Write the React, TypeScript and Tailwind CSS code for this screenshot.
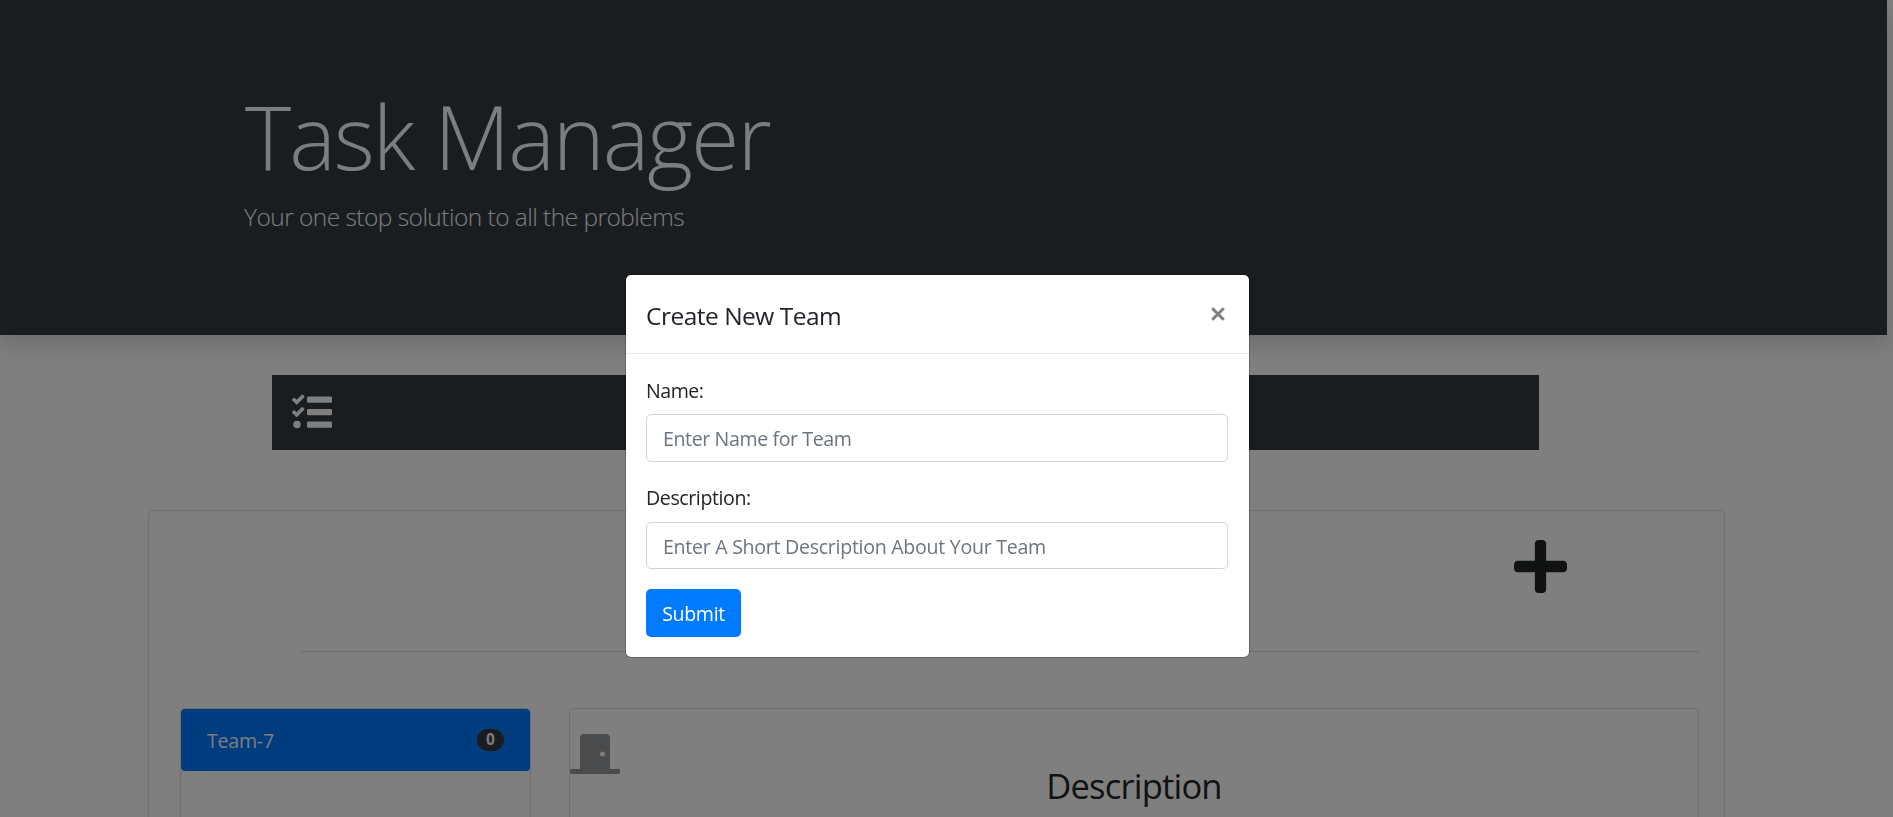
import React from "react";

function TasksIcon() {
  return (
    <svg viewBox="0 0 512 512" className="h-10 w-10 fill-white">
      <path d="M139.61 35.5a12 12 0 0 0-17 0L58.93 98.81l-22.7-22.12a12 12 0 0 0-17 0L3.53 92.41a12 12 0 0 0 0 17l47.59 47.4a12.78 12.78 0 0 0 17.61 0l15.59-15.62L156.52 69a12.09 12.09 0 0 0 .09-17zm0 159.19a12 12 0 0 0-17 0l-63.68 63.72-22.7-22.1a12 12 0 0 0-17 0L3.53 252a12 12 0 0 0 0 17L51 316.5a12.77 12.77 0 0 0 17.6 0l15.7-15.69 72.2-72.22a12 12 0 0 0 .09-16.9zM64 368c-26.49 0-48.59 21.5-48.59 48S37.53 464 64 464a48 48 0 0 0 0-96zm432 8H208a16 16 0 0 0-16 16v48a16 16 0 0 0 16 16h288a16 16 0 0 0 16-16v-48a16 16 0 0 0-16-16zm0-320H208a16 16 0 0 0-16 16v48a16 16 0 0 0 16 16h288a16 16 0 0 0 16-16V72a16 16 0 0 0-16-16zm0 160H208a16 16 0 0 0-16 16v48a16 16 0 0 0 16 16h288a16 16 0 0 0 16-16v-48a16 16 0 0 0-16-16z" />
    </svg>
  );
}

function PlusIcon() {
  return (
    <svg viewBox="0 0 448 512" className="h-[61px] w-[53px] fill-[#212529]">
      <path d="M416 208H272V64c0-17.67-14.33-32-32-32h-32c-17.67 0-32 14.33-32 32v144H32c-17.67 0-32 14.33-32 32v32c0 17.67 14.33 32 32 32h144v144c0 17.67 14.33 32 32 32h32c17.67 0 32-14.33 32-32V304h144c17.67 0 32-14.33 32-32v-32c0-17.67-14.33-32-32-32z" />
    </svg>
  );
}

function DoorIcon() {
  return (
    <svg viewBox="0 0 640 512" className="h-10 w-[50px] fill-[#949698]">
      <path d="M624 448H512V50.8C512 22.78 490.47 0 464 0H175.99c-26.47 0-48 22.78-48 50.8V448H16c-8.84 0-16 7.16-16 16v32c0 8.84 7.16 16 16 16h608c8.84 0 16-7.16 16-16v-32c0-8.84-7.16-16-16-16zM415.99 288c-17.67 0-32-14.33-32-32s14.33-32 32-32 32 14.33 32 32c.01 17.67-14.32 32-32 32z" />
    </svg>
  );
}

function Header() {
  return (
    <header className="relative h-[335px] w-[1887px] bg-[#343a40] pl-[245px] pt-[82px] shadow-[0_10px_20px_rgba(0,0,0,0.15)]">
      <h1 className="h-[108px] text-[88px] font-light leading-[108px] tracking-[-2px] text-[#f2fdfd]">Task Manager</h1>
      <p className="-ml-px mt-[11px] text-[24.5px] font-light leading-[32px] tracking-[-0.54px] text-[#f8f9fa]">
        Your one stop solution to all the problems
      </p>
    </header>
  );
}

function TeamDashboard() {
  return (
    <section className="ml-[148px] mt-[60px] h-[400px] w-[1577px] rounded-[5px] border border-[#dfdfdf]">
      <div className="flex h-[140px] justify-end pr-[157px] pt-[25px]">
        <PlusIcon />
      </div>
      <div className="ml-[152px] w-[1398px] border-t border-[#dfdfdf]" />
      <div className="ml-[31px] mt-[56px] flex">
        <div className="h-[240px] w-[351px] rounded-[5px] border border-[#dfdfdf]">
          <div className="flex h-[62px] items-center justify-between rounded-[4px] bg-[#007bff] pl-[26px] pr-[26px] text-[#f8f9fa]">
            <span className="pt-[2px] text-[19.6px] tracking-[-0.25px]">Team-7</span>
            <span className="flex h-[22px] w-[27px] items-center justify-center rounded-full bg-[#343a40] text-[15.5px] font-bold">0</span>
          </div>
        </div>
        <div className="ml-[38px] h-[240px] w-[1130px] rounded-[5px] border border-[#dfdfdf] pt-[25px]">
          <DoorIcon />
          <h3 className="-mt-[9px] text-center text-[34.5px] leading-[42px] tracking-[-0.8px] text-[#212529]">Description</h3>
        </div>
      </div>
    </section>
  );
}

function TeamModal() {
  return (
    <div className="fixed inset-0 bg-black/50">
      <div role="dialog" className="ml-[625px] mt-[274px] h-[384px] w-[625px] rounded-[6px] border border-black/20 bg-white bg-clip-padding text-[#212529]">
        <div className="flex h-[79px] justify-between border-b border-[#e9ecef] pl-[20px] pr-[24px]">
          <h5 className="pt-[22px] text-[24.5px] leading-[38px] tracking-[-0.5px]">Create New Team</h5>
          <button type="button" aria-label="Close" className="mt-[32px] h-[14px] w-[14px]">
            <svg viewBox="0 0 14 14" className="h-[14px] w-[14px] fill-none stroke-[#7f7f7f] stroke-[3]">
              <path d="M1.2 1.2 12.8 12.8M12.8 1.2 1.2 12.8" />
            </svg>
          </button>
        </div>
        <form className="px-[20px] pt-[22px]">
          <label className="block h-[30px] text-[19.6px] leading-[30px] tracking-[-0.5px]">Name:</label>
          <input
            placeholder="Enter Name for Team"
            className="mt-[8px] block h-[48px] w-[582px] rounded-[5px] border border-[#ced4da] px-[16px] text-[19.6px] tracking-[-0.4px] placeholder:text-[#6c757d]"
          />
          <label className="mt-[21px] block h-[30px] text-[19.6px] leading-[30px] tracking-[-0.42px]">Description:</label>
          <input
            placeholder="Enter A Short Description About Your Team"
            className="mt-[9px] block h-[47px] w-[582px] rounded-[5px] border border-[#ced4da] px-[16px] pt-[2px] text-[19.6px] tracking-[-0.29px] placeholder:text-[#6c757d]"
          />
          <button type="button" className="mt-[20px] block h-[48px] w-[95px] rounded-[5px] bg-[#007bff] pt-[2px] text-[19.6px] tracking-[-0.35px] text-white">
            Submit
          </button>
        </form>
      </div>
    </div>
  );
}

export default function App() {
  return (
    <div className="h-[817px] w-[1893px] overflow-hidden bg-white font-['Open_Sans','Noto_Sans',sans-serif]">
      <Header />
      <nav className="ml-[272px] mt-[40px] flex h-[75px] w-[1267px] items-center bg-[#343a40] pb-[2px] pl-[20px]">
        <TasksIcon />
      </nav>
      <TeamDashboard />
      <TeamModal />
    </div>
  );
}
